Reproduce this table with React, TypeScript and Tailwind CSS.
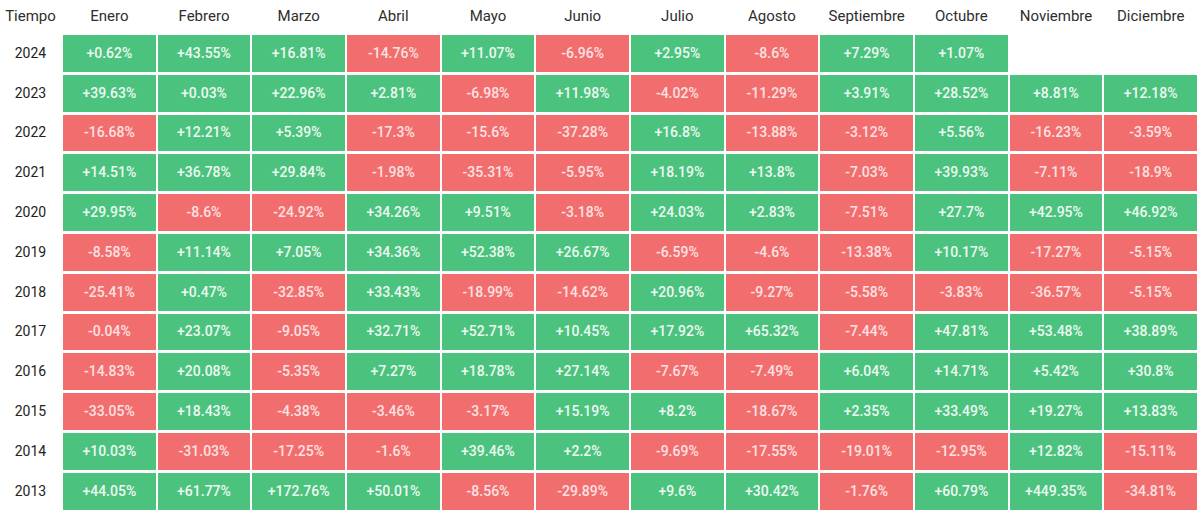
const months = ['Enero', 'Febrero', 'Marzo', 'Abril', 'Mayo', 'Junio', 'Julio', 'Agosto', 'Septiembre', 'Octubre', 'Noviembre', 'Diciembre'];

const rows: { year: string; values: string[] }[] = [
  { year: '2024', values: ['+0.62%', '+43.55%', '+16.81%', '-14.76%', '+11.07%', '-6.96%', '+2.95%', '-8.6%', '+7.29%', '+1.07%'] },
  { year: '2023', values: ['+39.63%', '+0.03%', '+22.96%', '+2.81%', '-6.98%', '+11.98%', '-4.02%', '-11.29%', '+3.91%', '+28.52%', '+8.81%', '+12.18%'] },
  { year: '2022', values: ['-16.68%', '+12.21%', '+5.39%', '-17.3%', '-15.6%', '-37.28%', '+16.8%', '-13.88%', '-3.12%', '+5.56%', '-16.23%', '-3.59%'] },
  { year: '2021', values: ['+14.51%', '+36.78%', '+29.84%', '-1.98%', '-35.31%', '-5.95%', '+18.19%', '+13.8%', '-7.03%', '+39.93%', '-7.11%', '-18.9%'] },
  { year: '2020', values: ['+29.95%', '-8.6%', '-24.92%', '+34.26%', '+9.51%', '-3.18%', '+24.03%', '+2.83%', '-7.51%', '+27.7%', '+42.95%', '+46.92%'] },
  { year: '2019', values: ['-8.58%', '+11.14%', '+7.05%', '+34.36%', '+52.38%', '+26.67%', '-6.59%', '-4.6%', '-13.38%', '+10.17%', '-17.27%', '-5.15%'] },
  { year: '2018', values: ['-25.41%', '+0.47%', '-32.85%', '+33.43%', '-18.99%', '-14.62%', '+20.96%', '-9.27%', '-5.58%', '-3.83%', '-36.57%', '-5.15%'] },
  { year: '2017', values: ['-0.04%', '+23.07%', '-9.05%', '+32.71%', '+52.71%', '+10.45%', '+17.92%', '+65.32%', '-7.44%', '+47.81%', '+53.48%', '+38.89%'] },
  { year: '2016', values: ['-14.83%', '+20.08%', '-5.35%', '+7.27%', '+18.78%', '+27.14%', '-7.67%', '-7.49%', '+6.04%', '+14.71%', '+5.42%', '+30.8%'] },
  { year: '2015', values: ['-33.05%', '+18.43%', '-4.38%', '-3.46%', '-3.17%', '+15.19%', '+8.2%', '-18.67%', '+2.35%', '+33.49%', '+19.27%', '+13.83%'] },
  { year: '2014', values: ['+10.03%', '-31.03%', '-17.25%', '-1.6%', '+39.46%', '+2.2%', '-9.69%', '-17.55%', '-19.01%', '-12.95%', '+12.82%', '-15.11%'] },
  { year: '2013', values: ['+44.05%', '+61.77%', '+172.76%', '+50.01%', '-8.56%', '-29.89%', '+9.6%', '+30.42%', '-1.76%', '+60.79%', '+449.35%', '-34.81%'] },
];

export default function App() {
  return (
    <div className="bg-white w-[1200px] h-[512px] overflow-hidden font-['Roboto','Liberation_Sans',sans-serif]">
      <div className="grid grid-cols-[61px_repeat(12,minmax(0,1fr))] gap-x-[2px] gap-y-[3px] w-[1197px]">
        {/* Header */}
        <div className="h-[32px] flex items-center justify-center text-[15px] text-[#2e2e2e]">Tiempo</div>
        {months.map(m => (
          <div key={m} className="h-[32px] flex items-center justify-center text-[15px] text-[#2e2e2e]">{m}</div>
        ))}

        {rows.map(row => (
          <div key={row.year} className="contents">
            <div className="h-[36.8px] flex items-center justify-center text-[14px] text-[#222]">{row.year}</div>
            {months.map((m, i) => {
              const v = row.values[i];
              if (!v) return <div key={m} className="h-[36.8px]" />;
              const up = v.startsWith('+');
              return (
                <div
                  key={m}
                  className={`h-[36.8px] flex items-center justify-center text-[14px] font-medium ${up ? 'bg-[#4bc27d] text-white/90' : 'bg-[#f26d6d] text-white/80'}`}
                >
                  {v}
                </div>
              );
            })}
          </div>
        ))}
      </div>
    </div>
  );
}
